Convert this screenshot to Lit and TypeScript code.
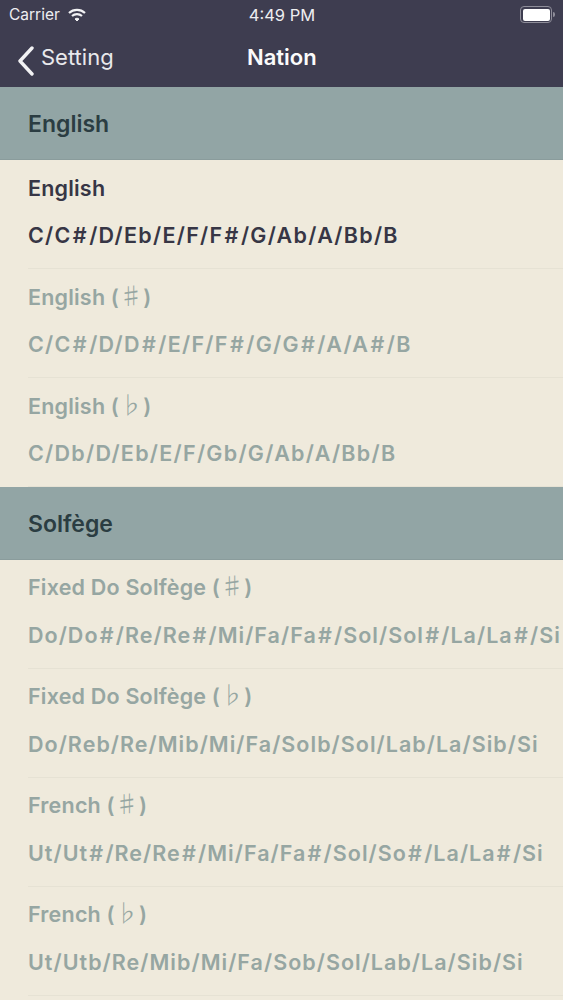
import { LitElement, html, css } from "lit";
import { customElement } from "lit/decorators.js";

type Row = { name: string; acc?: string; notes: string; on?: boolean };
const sections: { title: string; cls: string; rows: Row[] }[] = [
  {
    title: "English",
    cls: "letters",
    rows: [
      { name: "English", notes: "C/C#/D/Eb/E/F/F#/G/Ab/A/Bb/B", on: true },
      { name: "English", acc: "♯", notes: "C/C#/D/D#/E/F/F#/G/G#/A/A#/B" },
      { name: "English", acc: "♭", notes: "C/Db/D/Eb/E/F/Gb/G/Ab/A/Bb/B" },
    ],
  },
  {
    title: "Solfège",
    cls: "syllables",
    rows: [
      { name: "Fixed Do Solfège", acc: "♯", notes: "Do/Do#/Re/Re#/Mi/Fa/Fa#/Sol/Sol#/La/La#/Si" },
      { name: "Fixed Do Solfège", acc: "♭", notes: "Do/Reb/Re/Mib/Mi/Fa/Solb/Sol/Lab/La/Sib/Si" },
      { name: "French", acc: "♯", notes: "Ut/Ut#/Re/Re#/Mi/Fa/Fa#/Sol/So#/La/La#/Si" },
      { name: "French", acc: "♭", notes: "Ut/Utb/Re/Mib/Mi/Fa/Sob/Sol/Lab/La/Sib/Si" },
    ],
  },
];

@customElement("app-root")
export class AppRoot extends LitElement {
  static styles = css`
    :host { display: block; width: 563px; height: 1000px; overflow: hidden; background: #efeadc; font-family: Inter, Lato, sans-serif; }
    .top { background: #3e3d50; color: #fff; height: 87px; display: flex; flex-direction: column; }
    .status { height: 29px; display: grid; grid-template-columns: 1fr auto 1fr; align-items: center; padding: 0 8px 0 9px; font-size: 15.5px; color: #eeeef0; white-space: nowrap; }
    .time { font-size: 16.5px; }
    .carrier { display: flex; align-items: center; gap: 8px; }
    .battery { justify-self: end; display: flex; align-items: center; gap: 1px; }
    .cell { width: 27px; height: 12px; border: 1px solid #8e8d99; border-radius: 4px; padding: 1.5px; box-sizing: content-box; display: flex; }
    .cell i { flex: 1; background: #fff; border-radius: 2px; }
    .nub { width: 2px; height: 5px; background: #8e8d99; border-radius: 0 2px 2px 0; }
    .nav { flex: 1; display: grid; grid-template-columns: 230px auto 1fr; align-items: center; padding: 0 0 3px 17px; }
    .back { display: flex; align-items: center; gap: 7px; font-size: 22px; color: #e9e9ec; }
    .back svg { margin-top: 8px; }
    .title { font-size: 22px; font-weight: 600; color: #fbfbfb; }
    .head { height: 73px; box-sizing: border-box; background: #92a5a5; display: flex; align-items: center; padding: 2px 28px 0; font-size: 23px; font-weight: 600; color: #2b3d42; border-bottom: 1px solid #8a9c9c; }
    .row { height: 109px; box-sizing: border-box; margin-left: 28px; border-bottom: 1px solid #e6e2d4; color: #96a6a2; white-space: nowrap; display: flex; flex-direction: column; font-weight: 600; }
    .row.on { color: #373645; }
    .name { font-size: 21.5px; letter-spacing: 0.2px; height: 28px; line-height: 28px; margin-top: 14px; }
    .syllables .name { margin-top: 13px; }
    .acc { font-family: "Noto Sans CJK SC", sans-serif; font-size: 24px; font-weight: 300; line-height: 0; }
    .notes { font-size: 21.5px; height: 28px; line-height: 28px; margin-top: 19px; }
    .letters .notes { letter-spacing: 1.28px; }
    .syllables .notes { letter-spacing: 1.03px; margin-top: 20px; }
    .sh { padding: 0 1.2px; }
  `;

  private notes(n: string) {
    const parts = n.split("#");
    return parts.map((p, i) => (i < parts.length - 1 ? html`${p}<span class="sh">#</span>` : p));
  }

  render() {
    return html`
      <div class="top">
        <div class="status">
          <div class="carrier">Carrier
            <svg width="18" height="14" viewBox="0 0 18 14" fill="none" stroke="#f2f2f4" stroke-width="2.2">
              <path d="M1 5 C5.5 0.8 12.5 0.8 17 5"/>
              <path d="M4 8 C6.8 5.6 11.2 5.6 14 8"/>
              <path d="M7 11 L9 13 L11 11 C10 10 8 10 7 11 Z" fill="#f2f2f4" stroke-width="1"/>
            </svg>
          </div>
          <div class="time">4:49 PM</div>
          <div class="battery"><div class="cell"><i></i></div><div class="nub"></div></div>
        </div>
        <div class="nav">
          <div class="back">
            <svg width="17" height="30" viewBox="0 0 17 30" fill="none" stroke="#f2f2f4" stroke-width="3.4" stroke-linecap="round" stroke-linejoin="round"><path d="M15 2 L3 15 L15 28"/></svg>
            Setting
          </div>
          <div class="title">Nation</div>
        </div>
      </div>
      ${sections.map(
        (s) => html`
          <div class="head">${s.title}</div>
          <div class=${s.cls}>
            ${s.rows.map(
              (r) => html`
                <div class="row ${r.on ? "on" : ""}">
                  <div class="name">${r.name}${r.acc ? html` (<span class="acc">${r.acc}</span>)` : ""}</div>
                  <div class="notes">${this.notes(r.notes)}</div>
                </div>
              `
            )}
          </div>
        `
      )}
    `;
  }
}
